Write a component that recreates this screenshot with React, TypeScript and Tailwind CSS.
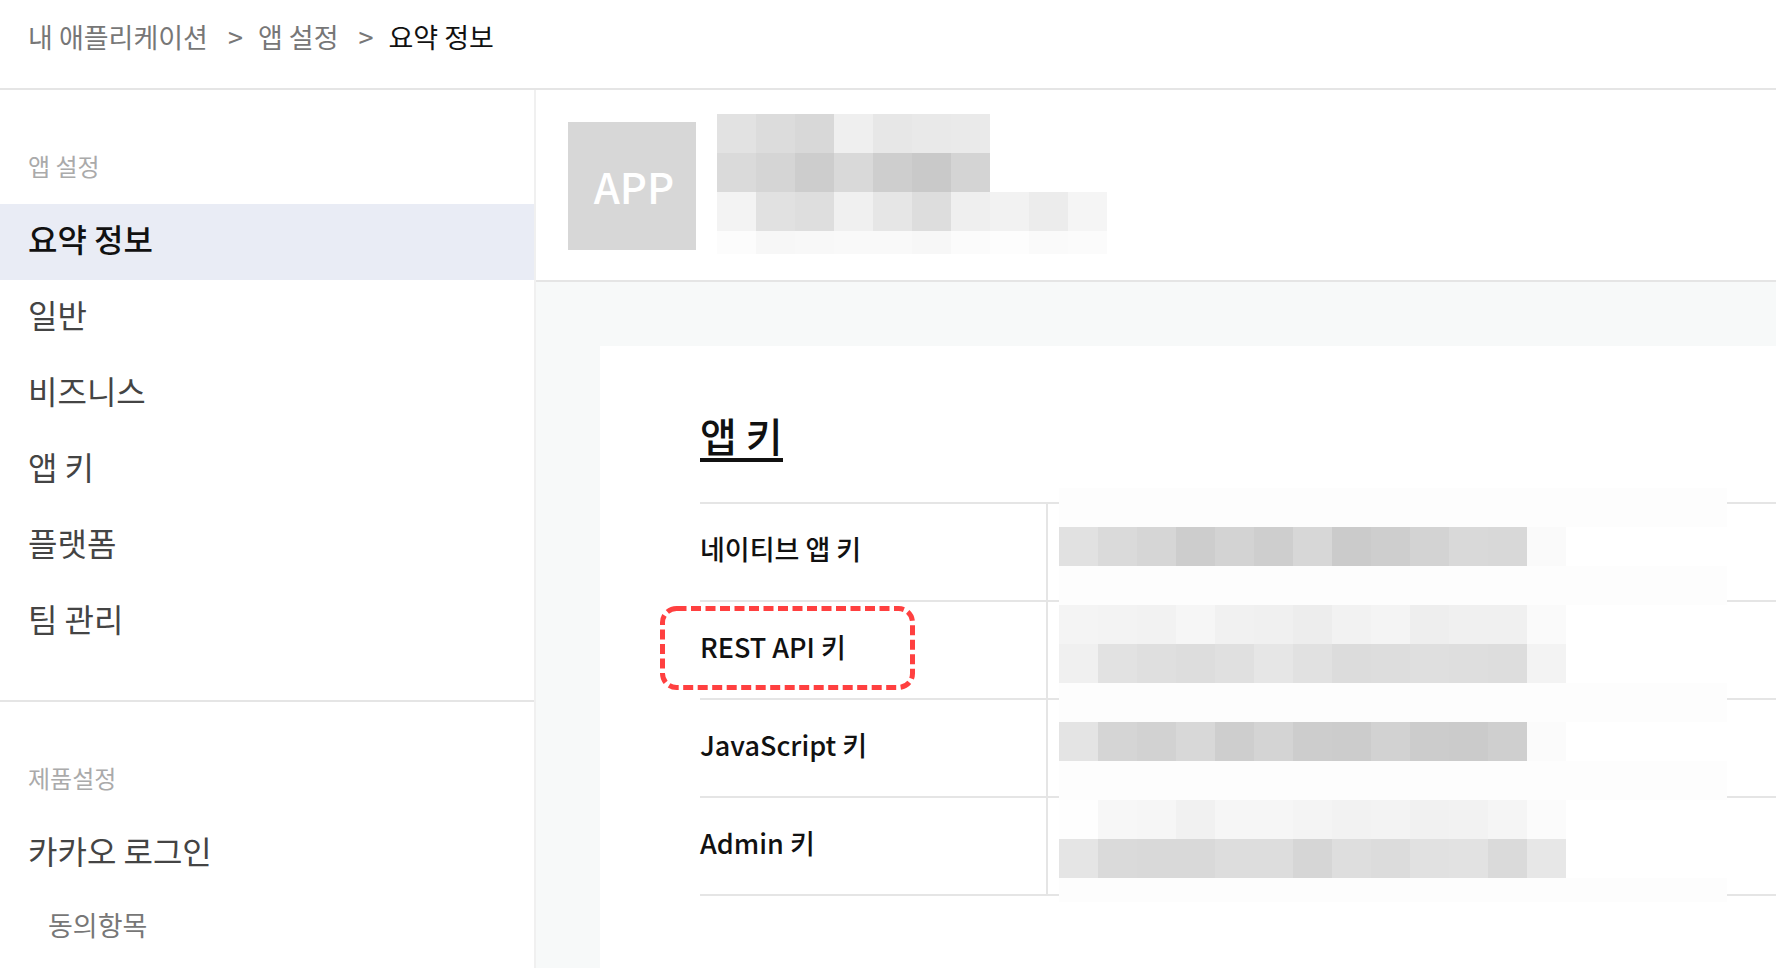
import { Fragment } from "react";

const crumbs = ["내 애플리케이션", "앱 설정", "요약 정보"];

const appMenu = ["요약 정보", "일반", "비즈니스", "앱 키", "플랫폼", "팀 관리"];

const keys = ["네이티브 앱 키", "REST API 키", "JavaScript 키", "Admin 키"];

// One number per tile, used as the grey level.
const appNameTiles = [
  [226, 220, 216, 239, 231, 233, 234],
  [218, 213, 205, 217, 206, 201, 212],
  [243, 225, 222, 240, 230, 221, 239, 242, 236, 245],
  [252, 247, 248, 249, 249, 247, 251, 253, 250, 251],
];

const keyTiles = [
  [],
  [225, 218, 214, 205, 211, 206, 215, 203, 206, 211, 217, 216, 250],
  [],
  [244, 243, 242, 246, 241, 240, 237, 242, 244, 238, 240, 240, 250],
  [240, 226, 223, 221, 224, 230, 225, 220, 221, 223, 222, 221, 243],
  [],
  [228, 213, 210, 216, 206, 212, 205, 204, 210, 204, 203, 207, 251],
  [],
  [254, 247, 246, 241, 246, 246, 244, 242, 243, 241, 242, 245, 251],
  [229, 218, 217, 217, 221, 221, 214, 222, 220, 225, 226, 218, 231],
  [],
];

function Mosaic({ rows }: { rows: number[][] }) {
  return (
    <div aria-hidden="true">
      {rows.map((row, y) => (
        <div key={y} className={row.length ? "flex h-[39px] bg-white" : "h-[39px] bg-[#fdfdfd]"}>
          {row.map((level, x) => (
            <span
              key={x}
              className="w-[39px] shrink-0"
              style={{ backgroundColor: `rgb(${level}, ${level}, ${level})` }}
            />
          ))}
        </div>
      ))}
    </div>
  );
}

function Breadcrumb() {
  return (
    <nav className="flex h-[90px] items-start border-b-2 border-[#e5e5e5] px-7 pt-4 text-[27px] leading-[42px] text-[#777]">
      {crumbs.map((crumb, i) => (
        <Fragment key={crumb}>
          {i > 0 && <span className="ml-5 mr-[15px]">&gt;</span>}
          <a href="#" className={i === crumbs.length - 1 ? "text-[#111]" : ""}>
            {crumb}
          </a>
        </Fragment>
      ))}
    </nav>
  );
}

function Sidebar() {
  return (
    <aside className="w-[536px] shrink-0 border-r-2 border-[#f0f0f0]">
      <section className="border-b-2 border-[#e5e5e5] pb-10 pt-[58px]">
        <h2 className="h-14 px-7 text-2xl leading-9 text-[#aaa]">앱 설정</h2>
        <ul>
          {appMenu.map((item, i) => (
            <li key={item}>
              <a
                href="#"
                className={
                  i === 0
                    ? "block h-[76px] bg-[#e9ecf5] px-7 text-[32px] font-medium leading-[68px] text-[#111]"
                    : "block h-[76px] px-7 text-[32px] leading-[68px] text-[#444]"
                }
              >
                {item}
              </a>
            </li>
          ))}
        </ul>
      </section>
      <section className="pt-[58px]">
        <h2 className="h-14 px-7 text-2xl leading-9 text-[#aaa]">제품설정</h2>
        <a href="#" className="block h-[76px] px-7 text-[32px] leading-[68px] text-[#444]">
          카카오 로그인
        </a>
        <a href="#" className="block h-[72px] px-12 text-[27px] leading-[66px] text-[#777]">
          동의항목
        </a>
      </section>
    </aside>
  );
}

function AppHeader() {
  return (
    <header className="flex h-[192px] gap-[21px] border-b-2 border-[#e5e5e5] pl-8 pt-6">
      <div className="mt-2 flex size-32 shrink-0 items-center justify-center bg-[#d7d7d7] pl-1 text-[42px] font-medium leading-none text-white">
        APP
      </div>
      <div className="h-[140px] overflow-hidden">
        <Mosaic rows={appNameTiles} />
      </div>
    </header>
  );
}

function KeyTable() {
  return (
    <div className="relative mt-10">
      <table className="w-full border-separate border-spacing-0 border-b-2 border-[#e5e5e5] text-left">
        <tbody>
          {keys.map((name) => (
            <tr key={name} className="h-[98px]">
              <th
                scope="row"
                className="relative w-[348px] border-r-2 border-t-2 border-[#e5e5e5] pb-1.5 text-[27px] font-medium leading-10"
              >
                {name}
                {name === "REST API 키" && (
                  <svg
                    className="absolute -left-10 top-1 h-[85px] w-[256px]"
                    viewBox="0 0 256 85"
                    fill="none"
                    aria-hidden="true"
                  >
                    <rect
                      x="2.5"
                      y="2.5"
                      width="250"
                      height="79"
                      rx="14"
                      stroke="#ff4040"
                      strokeWidth="5"
                      strokeDasharray="10 4.5"
                    />
                  </svg>
                )}
              </th>
              <td className="border-t-2 border-[#e5e5e5]" />
            </tr>
          ))}
        </tbody>
      </table>
      <div className="absolute -top-[14px] left-[359px] h-[414px] w-[668px] overflow-hidden">
        <Mosaic rows={keyTiles} />
      </div>
    </div>
  );
}

export default function App() {
  return (
    <div className="flex h-screen flex-col overflow-hidden bg-white font-['Noto_Sans_CJK_KR',sans-serif] text-[#111]">
      <Breadcrumb />
      <div className="flex min-h-0 flex-1">
        <Sidebar />
        <main className="flex min-w-0 flex-1 flex-col">
          <AppHeader />
          <div className="flex-1 bg-[#f7f9f9] pl-16 pt-16">
            <section className="h-full bg-white pl-[100px] pt-[66px]">
              <h1 className="w-fit border-b-4 border-[#111] text-[40px] font-medium leading-[46px]">앱 키</h1>
              <KeyTable />
            </section>
          </div>
        </main>
      </div>
    </div>
  );
}
